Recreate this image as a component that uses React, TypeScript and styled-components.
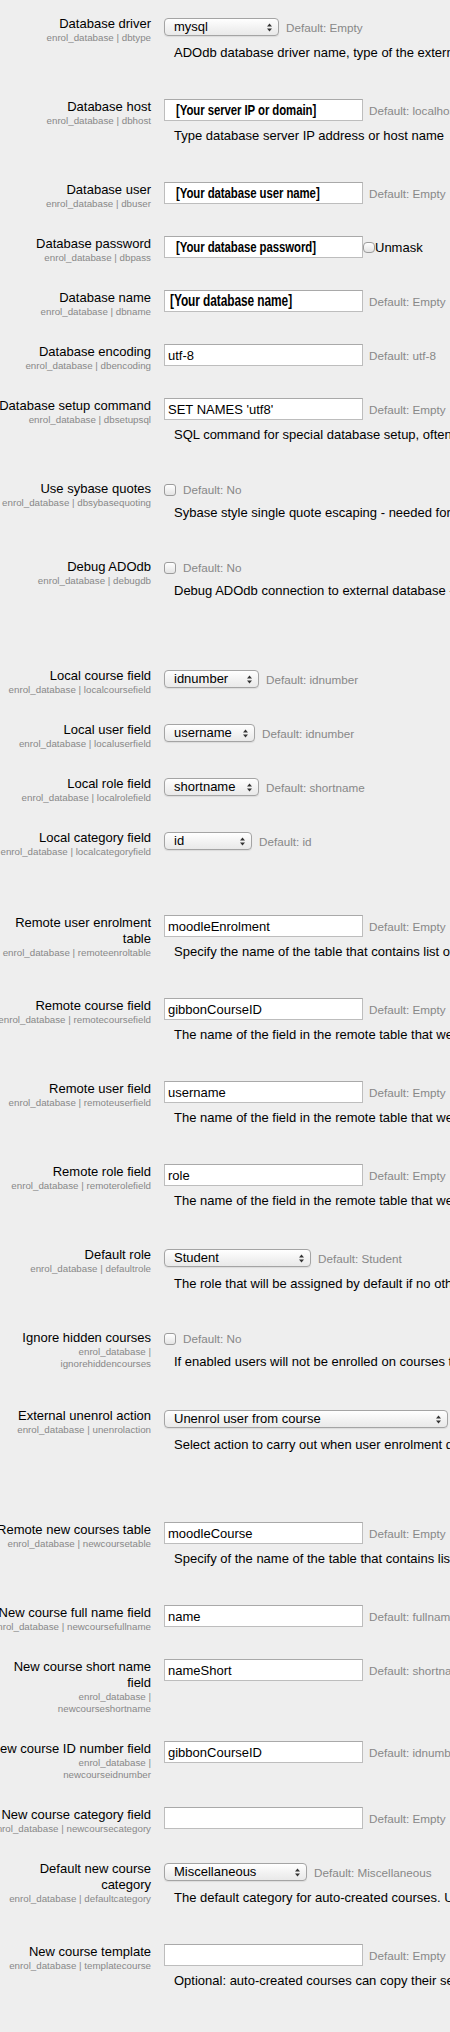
import React from "react";
import styled, { createGlobalStyle } from "styled-components";

type Control =
  | { kind: "select"; value: string; width: number }
  | { kind: "text"; value: string; mark?: "small" | "large" }
  | { kind: "password"; value: string }
  | { kind: "checkbox" };

interface Setting {
  label: string;
  name: string;
  control: Control;
  defaultInfo?: string;
  description?: string;
}

const sections: Setting[][] = [
  [
    {
      label: "Database driver",
      name: "dbtype",
      control: { kind: "select", value: "mysql", width: 115 },
      defaultInfo: "Default: Empty",
      description: "ADOdb database driver name, type of the external database engine.",
    },
    {
      label: "Database host",
      name: "dbhost",
      control: { kind: "text", value: "[Your server IP or domain]", mark: "small" },
      defaultInfo: "Default: localhost",
      description: "Type database server IP address or host name",
    },
    {
      label: "Database user",
      name: "dbuser",
      control: { kind: "text", value: "[Your database user name]", mark: "small" },
      defaultInfo: "Default: Empty",
    },
    {
      label: "Database password",
      name: "dbpass",
      control: { kind: "password", value: "[Your database password]" },
    },
    {
      label: "Database name",
      name: "dbname",
      control: { kind: "text", value: "[Your database name]", mark: "large" },
      defaultInfo: "Default: Empty",
    },
    {
      label: "Database encoding",
      name: "dbencoding",
      control: { kind: "text", value: "utf-8" },
      defaultInfo: "Default: utf-8",
    },
    {
      label: "Database setup command",
      name: "dbsetupsql",
      control: { kind: "text", value: "SET NAMES 'utf8'" },
      defaultInfo: "Default: Empty",
      description:
        "SQL command for special database setup, often used to setup communication encoding - example for MySQL and PostgreSQL: SET NAMES 'utf8'",
    },
    {
      label: "Use sybase quotes",
      name: "dbsybasequoting",
      control: { kind: "checkbox" },
      defaultInfo: "Default: No",
      description:
        "Sybase style single quote escaping - needed for Oracle, MS SQL and some other databases. Do not use for MySQL!",
    },
    {
      label: "Debug ADOdb",
      name: "debugdb",
      control: { kind: "checkbox" },
      defaultInfo: "Default: No",
      description:
        "Debug ADOdb connection to external database - use when getting empty page during login. Not suitable for production sites!",
    },
  ],
  [
    {
      label: "Local course field",
      name: "localcoursefield",
      control: { kind: "select", value: "idnumber", width: 95 },
      defaultInfo: "Default: idnumber",
    },
    {
      label: "Local user field",
      name: "localuserfield",
      control: { kind: "select", value: "username", width: 91 },
      defaultInfo: "Default: idnumber",
    },
    {
      label: "Local role field",
      name: "localrolefield",
      control: { kind: "select", value: "shortname", width: 95 },
      defaultInfo: "Default: shortname",
    },
    {
      label: "Local category field",
      name: "localcategoryfield",
      control: { kind: "select", value: "id", width: 88 },
      defaultInfo: "Default: id",
    },
  ],
  [
    {
      label: "Remote user enrolment table",
      name: "remoteenroltable",
      control: { kind: "text", value: "moodleEnrolment" },
      defaultInfo: "Default: Empty",
      description:
        "Specify the name of the table that contains list of user enrolments. Empty means no user enrolment sync.",
    },
    {
      label: "Remote course field",
      name: "remotecoursefield",
      control: { kind: "text", value: "gibbonCourseID" },
      defaultInfo: "Default: Empty",
      description:
        "The name of the field in the remote table that we are using to match entries in the course table.",
    },
    {
      label: "Remote user field",
      name: "remoteuserfield",
      control: { kind: "text", value: "username" },
      defaultInfo: "Default: Empty",
      description:
        "The name of the field in the remote table that we are using to match entries in the user table.",
    },
    {
      label: "Remote role field",
      name: "remoterolefield",
      control: { kind: "text", value: "role" },
      defaultInfo: "Default: Empty",
      description:
        "The name of the field in the remote table that we are using to match entries in the roles table.",
    },
    {
      label: "Default role",
      name: "defaultrole",
      control: { kind: "select", value: "Student", width: 147 },
      defaultInfo: "Default: Student",
      description:
        "The role that will be assigned by default if no other role is specified in external table.",
    },
    {
      label: "Ignore hidden courses",
      name: "ignorehiddencourses",
      control: { kind: "checkbox" },
      defaultInfo: "Default: No",
      description:
        "If enabled users will not be enrolled on courses that are set to be unavailable to students.",
    },
    {
      label: "External unenrol action",
      name: "unenrolaction",
      control: { kind: "select", value: "Unenrol user from course", width: 284 },
      defaultInfo: "Default: Unenrol user from course",
      description:
        "Select action to carry out when user enrolment disappears from external data source. Please note that some user data and settings are purged from course during course unenrolment.",
    },
  ],
  [
    {
      label: "Remote new courses table",
      name: "newcoursetable",
      control: { kind: "text", value: "moodleCourse" },
      defaultInfo: "Default: Empty",
      description:
        "Specify of the name of the table that contains list of courses that should be created automatically. Empty means no courses are created.",
    },
    {
      label: "New course full name field",
      name: "newcoursefullname",
      control: { kind: "text", value: "name" },
      defaultInfo: "Default: fullname",
    },
    {
      label: "New course short name field",
      name: "newcourseshortname",
      control: { kind: "text", value: "nameShort" },
      defaultInfo: "Default: shortname",
    },
    {
      label: "New course ID number field",
      name: "newcourseidnumber",
      control: { kind: "text", value: "gibbonCourseID" },
      defaultInfo: "Default: idnumber",
    },
    {
      label: "New course category field",
      name: "newcoursecategory",
      control: { kind: "text", value: "" },
      defaultInfo: "Default: Empty",
    },
    {
      label: "Default new course category",
      name: "defaultcategory",
      control: { kind: "select", value: "Miscellaneous", width: 143 },
      defaultInfo: "Default: Miscellaneous",
      description:
        "The default category for auto-created courses. Used when no category id specified or not found.",
    },
    {
      label: "New course template",
      name: "templatecourse",
      control: { kind: "text", value: "" },
      defaultInfo: "Default: Empty",
      description:
        "Optional: auto-created courses can copy their settings from a template course. Type here the shortname of the template course.",
    },
  ],
];

function UpDownArrows() {
  return (
    <svg width="5" height="9" viewBox="0 0 5 9">
      <path d="M0 3.6 L2.5 0.4 L5 3.6 Z" fill="#333" />
      <path d="M0 5.4 L2.5 8.6 L5 5.4 Z" fill="#333" />
    </svg>
  );
}

function TextValue({ value, mark }: { value: string; mark?: "small" | "large" }) {
  return (
    <TextBox $indent={mark === "small" ? 11 : mark === "large" ? 5 : 3}>
      {mark ? <Marker $large={mark === "large"}>{value}</Marker> : value}
    </TextBox>
  );
}

function SettingControl({ setting }: { setting: Setting }) {
  const { control, defaultInfo } = setting;

  if (control.kind === "password") {
    return (
      <ControlLine $gap={0}>
        <TextValue value={control.value} mark="small" />
        <Tick $round />
        <Unmask>Unmask</Unmask>
      </ControlLine>
    );
  }

  if (control.kind === "checkbox") {
    return (
      <ControlLine $gap={7} $compact>
        <Tick />
        {defaultInfo && <DefaultInfo>{defaultInfo}</DefaultInfo>}
      </ControlLine>
    );
  }

  if (control.kind === "select") {
    return (
      <ControlLine $gap={7}>
        <SelectBox $width={control.width}>
          <span>{control.value}</span>
          <UpDownArrows />
        </SelectBox>
        {defaultInfo && <DefaultInfo>{defaultInfo}</DefaultInfo>}
      </ControlLine>
    );
  }

  return (
    <ControlLine $gap={6}>
      <TextValue value={control.value} mark={control.mark} />
      {defaultInfo && <DefaultInfo>{defaultInfo}</DefaultInfo>}
    </ControlLine>
  );
}

function App() {
  return (
    <>
      <GlobalStyle />
      <Page>
        {sections.map((settings, i) => (
          <Section key={i}>
            {settings.map((s) => (
              <Row key={s.name}>
                <Label>
                  <Title>{s.label}</Title>
                  <Name>enrol_database | {s.name}</Name>
                </Label>
                <SettingCol>
                  <SettingControl setting={s} />
                  {s.description && <Description>{s.description}</Description>}
                </SettingCol>
              </Row>
            ))}
          </Section>
        ))}
      </Page>
    </>
  );
}

export default App;

const GlobalStyle = createGlobalStyle`
  html {
    overflow: hidden;
    background: #eeeeee;
  }

  body {
    margin: 0;
    background: #eeeeee;
    color: #000;
    font-family: "Liberation Sans", Arial, sans-serif;
  }
`;

const Page = styled.div`
  padding-top: 16px;
  margin-left: -11px;
`;

const Section = styled.section`
  display: flex;
  flex-direction: column;

  & + & {
    margin-top: 31px;
  }
`;

const Row = styled.div`
  display: grid;
  grid-template-columns: 162px minmax(0, 1fr);
  column-gap: 13px;
  margin-bottom: 26px;
`;

const Label = styled.div`
  text-align: right;
`;

const Title = styled.div`
  font-size: 13px;
  line-height: 16px;
`;

const Name = styled.div`
  font-size: 9.75px;
  line-height: 12px;
  color: #888;
`;

const SettingCol = styled.div`
  min-width: 0;
  white-space: nowrap;
`;

const ControlLine = styled.div<{ $gap: number; $compact?: boolean }>`
  display: flex;
  align-items: center;
  height: ${(p) => (p.$compact ? 17 : 22)}px;
  gap: ${(p) => p.$gap}px;

  & > * {
    flex-shrink: 0;
  }
`;

const SelectBox = styled.div<{ $width: number }>`
  box-sizing: border-box;
  width: ${(p) => p.$width}px;
  height: 18px;
  display: flex;
  align-items: center;
  justify-content: space-between;
  padding: 0 6px 0 9px;
  border: 1px solid #a4a4a4;
  border-radius: 4px;
  background: linear-gradient(#ffffff, #f1f1f1 60%, #e9e9e9);
  box-shadow: 0 1px 1px rgba(0, 0, 0, 0.08);
  font-size: 13px;
  line-height: 16px;
`;

const TextBox = styled.div<{ $indent: number }>`
  box-sizing: border-box;
  width: 199px;
  height: 22px;
  display: flex;
  align-items: center;
  padding-left: ${(p) => p.$indent}px;
  border: 1px solid #bdbdbd;
  border-top-color: #a9a9a9;
  background: #fff;
  font-size: 13px;
  overflow: hidden;
`;

/* the bracketed hints are drawn in a heavy, tall, condensed face */
const Marker = styled.span<{ $large?: boolean }>`
  display: inline-block;
  flex-shrink: 0;
  font-family: "Liberation Sans", Arial, sans-serif;
  font-weight: 700;
  font-size: ${(p) => (p.$large ? 17 : 15)}px;
  line-height: 18px;
  letter-spacing: -0.1px;
  color: #000;
  transform: scaleX(${(p) => (p.$large ? 0.7 : 0.76)});
  transform-origin: left center;
`;

const Tick = styled.span<{ $round?: boolean }>`
  box-sizing: border-box;
  width: 12px;
  height: ${(p) => (p.$round ? 11 : 12)}px;
  border: 1px solid #9c9c9c;
  border-radius: ${(p) => (p.$round ? 4 : 3)}px;
  background: linear-gradient(#ffffff, #e4e4e4);
`;

const DefaultInfo = styled.span`
  font-size: 11.7px;
  color: #888;
`;

const Unmask = styled.span`
  font-size: 13px;
`;

const Description = styled.div`
  margin: 7px 0 12px 10px;
  font-size: 13px;
  line-height: 16px;
`;
